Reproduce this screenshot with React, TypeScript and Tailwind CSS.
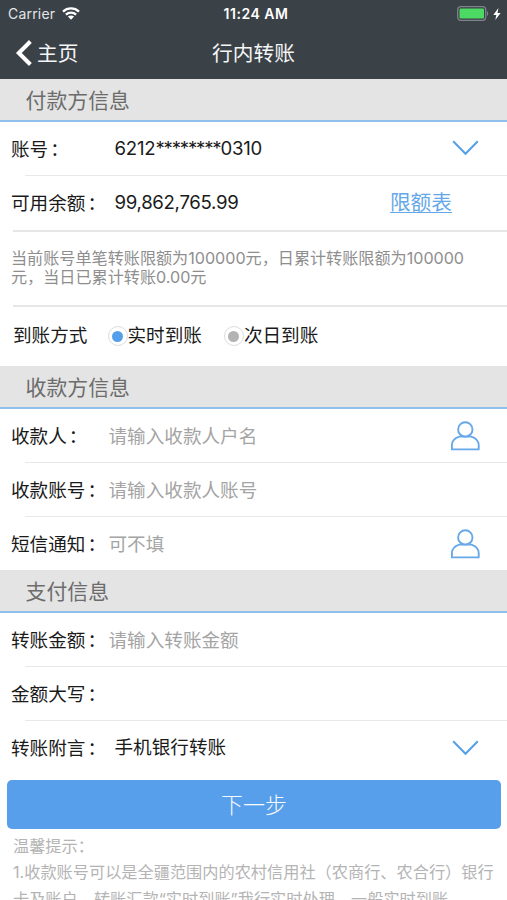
import React, { useState } from 'react';

function Chevron() {
  return (
    <svg className="mb-[2px]" width="28" height="18" viewBox="0 0 28 18" fill="none" stroke="#559fe6" strokeWidth="2">
      <path d="M1.200 2.200 13.500 14.800 25.800 2.200" />
    </svg>
  );
}

function Person() {
  return (
    <svg width="30" height="30" viewBox="0 0 30 30" fill="none" stroke="#68a8e8" strokeWidth="1.900">
      <circle cx="15.300" cy="8.400" r="7.200" />
      <path d="M9.300 15.600h12c4.500 1.500 7.400 4.600 7.400 8.500v4.300H1.900v-4.300c0-3.900 2.900-7 7.400-8.500Z" strokeLinejoin="round" />
    </svg>
  );
}

function SectionTitle({ children }: { children: React.ReactNode }) {
  return (
    <h2 className="h-[43px] shrink-0 bg-[#e4e4e4] border-b-2 border-[#8fbfec] pl-[25.5px] text-[20.9px] leading-[43px] text-[#6c6c6c]">
      {children}
    </h2>
  );
}

function Row({ label, children, icon, last }: { label: string; children?: React.ReactNode; icon?: React.ReactNode; last?: boolean }) {
  return (
    <div className="h-[53.8px] shrink-0 flex flex-col">
      <div className="flex-1 flex items-center pt-[2px] pl-[11px] pr-[27px] text-[18.6px] text-[#1a1a1a]">
        <div className="w-[97px] flex shrink-0 whitespace-nowrap pt-px">
          {label}
          <span className="ml-[2px]">：</span>
        </div>
        <div className="flex-1 flex items-center whitespace-nowrap">{children}</div>
        {icon}
      </div>
      {!last && <div className="h-px ml-[25px] bg-[#e8e8e8]" />}
    </div>
  );
}

function Field({ placeholder }: { placeholder: string }) {
  return (
    <input
      className="w-full outline-none bg-transparent pt-px pl-[0.5px] text-[18.6px] text-[#1a1a1a] placeholder:text-[#a4a4a4]"
      placeholder={placeholder}
    />
  );
}

function Radio({ label, checked, onSelect }: { label: string; checked: boolean; onSelect: () => void }) {
  return (
    <button className="flex items-center whitespace-nowrap" onClick={onSelect}>
      <span className="size-[20px] rounded-full border border-[#dcdcdc] flex items-center justify-center">
        <span className={checked ? 'size-[11px] rounded-full bg-[#559fea]' : 'size-[11px] rounded-full bg-[#b3b3b3]'} />
      </span>
      {label}
    </button>
  );
}

export default function App() {
  const [mode, setMode] = useState('now');

  return (
    <div className="w-[507px] h-[900px] overflow-hidden flex flex-col bg-white font-['Inter','Noto_Sans_CJK_SC',sans-serif]">
      <header className="h-[79px] shrink-0 bg-[#3a4147] text-white">
        <div className="h-[27px] grid grid-cols-3 items-center pl-[8px] pr-[6px] text-[14px]">
          <div className="flex items-center gap-[7px] text-[#e3e6e8] tracking-[0.2px]">
            Carrier
            <svg width="18" height="13" viewBox="0 0 18 13" fill="none" stroke="#fff" strokeWidth="2.300">
              <path d="M1 4.600C5.500.4 12.500.4 17 4.600M3.900 7.600c2.900-2.700 7.300-2.700 10.200 0" />
              <path d="M9 12.800 5.900 9.600c1.800-1.600 4.400-1.600 6.200 0Z" fill="#fff" stroke="none" />
            </svg>
          </div>
          <div className="pl-[3px] text-center font-semibold text-[14px] tracking-[0.500px] whitespace-nowrap">11:24 AM</div>
          <div className="flex items-center justify-end gap-[4px]">
            <svg width="32" height="15" viewBox="0 0 32 15">
              <rect x=".7" y=".7" width="28" height="13.600" rx="3" fill="none" stroke="#7e8488" strokeWidth="1.300" />
              <rect x="2.500" y="2.500" width="24.500" height="10" rx="1.200" fill="#4cd964" />
              <path d="M30 5c1.600.5 1.600 4.500 0 5Z" fill="#7e8488" />
            </svg>
            <svg width="8" height="12" viewBox="0 0 8 12" fill="#fff">
              <path d="M5.400 0 .3 6.900h3L2.300 12l5.300-7H4.500Z" />
            </svg>
          </div>
        </div>
        <div className="h-[52px] pt-px grid grid-cols-3 items-center text-[20.7px] text-[#f4f5f6]">
          <div className="flex items-center gap-[4px] pl-[14px]">
            <svg width="18" height="26" viewBox="0 0 18 26" fill="none" stroke="#fff" strokeWidth="4">
              <path d="M16.400 1.500 4.800 13l11.600 11.500" />
            </svg>
            <span className="pl-[1px]">主页</span>
          </div>
          <h1 className="text-center">行内转账</h1>
        </div>
      </header>

      <SectionTitle>付款方信息</SectionTitle>
      <Row label="账号" icon={<Chevron />}>
        <span className="pl-[6.5px] tracking-[-0.200px]">
          6212<span className="tracking-[-1.200px]">********</span>0310
        </span>
      </Row>
      <Row label="可用余额" last>
        <span className="pb-[2px] pl-[6.5px] tracking-[-0.300px]">99,862,765.99</span>
        <a className="ml-auto mr-[28px] pb-[2px] text-[20.7px] text-[#64a8e8] underline underline-offset-2 decoration-1">限额表</a>
      </Row>
      <div className="h-[2px] shrink-0 ml-[13px] bg-[#e6e6e6]" />
      <p className="h-[73px] shrink-0 pt-[17px] pl-[11px] text-[16.120px] leading-[19px] text-[#8e8e8e] whitespace-nowrap">
        当前账号单笔转账限额为100000元，日累计转账限额为100000
        <br />
        元，当日已累计转账0.00元
      </p>
      <div className="h-[2px] shrink-0 ml-[13px] bg-[#e6e6e6]" />
      <div className="h-[59.400px] shrink-0 flex items-center pl-[13px] text-[18.6px] text-[#1a1a1a]">
        <span className="w-[94.5px]">到账方式</span>
        <Radio label="实时到账" checked={mode === 'now'} onSelect={() => setMode('now')} />
        <span className="w-[22px]" />
        <Radio label="次日到账" checked={mode === 'next'} onSelect={() => setMode('next')} />
      </div>

      <SectionTitle>收款方信息</SectionTitle>
      <Row label="收款人" icon={<Person />}>
        <Field placeholder="请输入收款人户名" />
      </Row>
      <Row label="收款账号">
        <Field placeholder="请输入收款人账号" />
      </Row>
      <Row label="短信通知" icon={<Person />} last>
        <Field placeholder="可不填" />
      </Row>

      <SectionTitle>支付信息</SectionTitle>
      <Row label="转账金额">
        <Field placeholder="请输入转账金额" />
      </Row>
      <Row label="金额大写" />
      <Row label="转账附言" icon={<Chevron />} last>
        <span className="pb-[2px] pl-[6.5px]">手机银行转账</span>
      </Row>

      <button className="mt-[5.400px] ml-[7px] mr-[6px] h-[49px] shrink-0 rounded-[5px] bg-[#579fea] pt-[2px] text-[#f7faff] text-[22px] font-light">下一步</button>
      <div className="shrink-0 pt-[3.500px] pl-[13px] text-[16.200px] leading-[26.500px] text-[#b4b4b4] whitespace-nowrap">
        <p>温馨提示：</p>
        <p>1.收款账号可以是全疆范围内的农村信用社（农商行、农合行）银行</p>
        <p>卡及账户，转账汇款“实时到账”我行实时处理，一般实时到账</p>
      </div>
    </div>
  );
}
